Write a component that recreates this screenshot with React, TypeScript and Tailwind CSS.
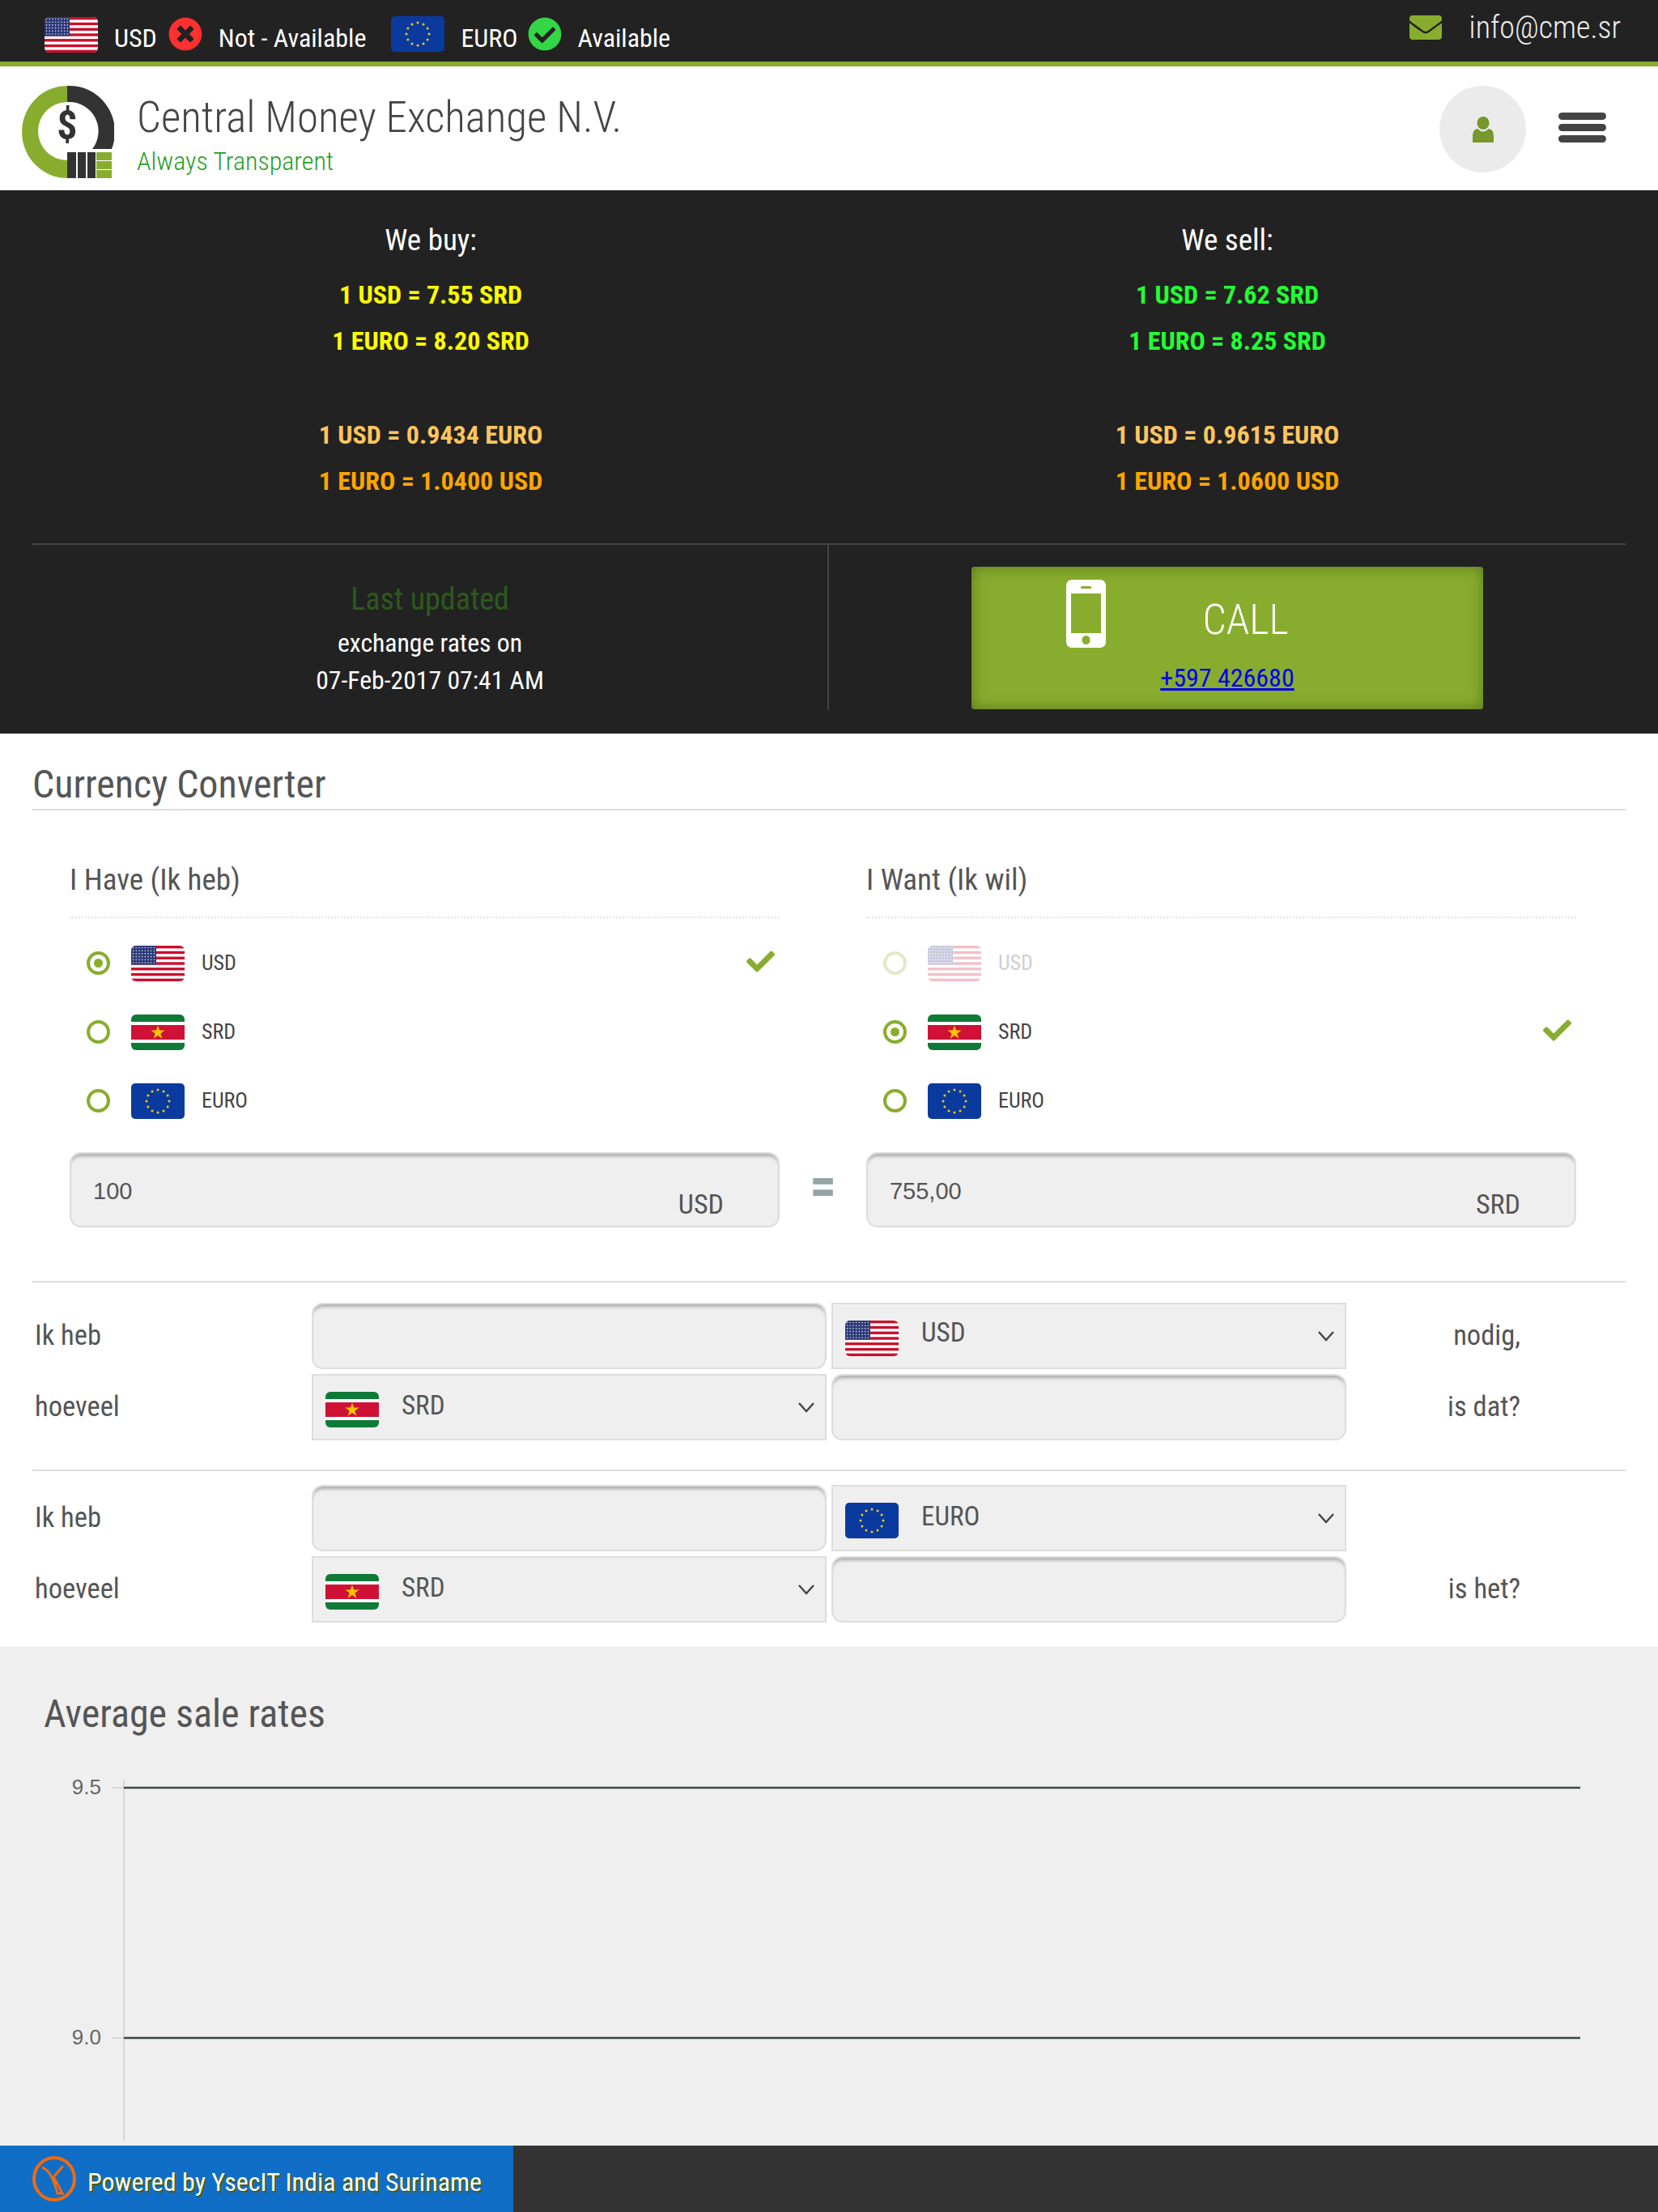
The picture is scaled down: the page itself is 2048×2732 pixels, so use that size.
import { FaCheck, FaCheckCircle, FaEnvelope, FaTimesCircle } from "react-icons/fa";

const radioLeft = ["USD", "SRD", "EURO"];

function FlagUS({ className }: { className?: string }) {
  return (
    <svg viewBox="0 0 66 44" className={className}>
      <defs>
        <clipPath id="us-clip"><rect width="66" height="44" rx="6" /></clipPath>
      </defs>
      <g clipPath="url(#us-clip)">
        <rect width="66" height="44" fill="#fff" />
        {[0, 1, 2, 3, 4, 5, 6].map((i) => (
          <rect key={i} y={i * 6.77} width="66" height="3.4" fill="#c8102e" />
        ))}
        <rect width="31" height="23.5" fill="#2c3a78" />
        {[0, 1, 2, 3, 4, 5].map((r) =>
          [0, 1, 2, 3, 4, 5, 6, 7].map((c) => (
            <circle key={`${r}-${c}`} cx={2.5 + c * 3.7} cy={2.5 + r * 3.7} r="0.8" fill="#dfe3f2" />
          ))
        )}
      </g>
    </svg>
  );
}

function FlagSR({ className }: { className?: string }) {
  return (
    <svg viewBox="0 0 66 44" className={className}>
      <defs>
        <clipPath id="sr-clip"><rect width="66" height="44" rx="6" /></clipPath>
      </defs>
      <g clipPath="url(#sr-clip)">
        <rect width="66" height="44" fill="#fff" />
        <rect width="66" height="9" fill="#0f7a37" />
        <rect y="35" width="66" height="9" fill="#0f7a37" />
        <rect y="13" width="66" height="18" fill="#cf1136" />
        <polygon points="33,13.5 35.2,19.6 41.6,19.6 36.4,23.5 38.3,29.8 33,26 27.7,29.8 29.6,23.5 24.4,19.6 30.8,19.6" fill="#f8c300" />
      </g>
    </svg>
  );
}

function FlagEU({ className }: { className?: string }) {
  const stars = Array.from({ length: 12 }, (_, i) => (i * Math.PI) / 6);
  return (
    <svg viewBox="0 0 66 44" className={className}>
      <rect width="66" height="44" rx="5" fill="#0b3a9e" />
      {stars.map((a, i) => (
        <circle key={i} cx={33 + Math.cos(a) * 14} cy={22 + Math.sin(a) * 14} r="1.5" fill="#f2cb1d" />
      ))}
    </svg>
  );
}

function Flag({ code, className }: { code: string; className?: string }) {
  if (code === "USD") return <FlagUS className={className} />;
  if (code === "SRD") return <FlagSR className={className} />;
  return <FlagEU className={className} />;
}

function Logo() {
  return (
    <svg viewBox="0 0 114 116" className="mt-[2px] h-[116px] w-[114px] shrink-0">
      <path d="M56 1 A56 57 0 0 0 56 115 L56 93 A36 36 0 0 1 56 21 Z" fill="#88ad2e" />
      <path d="M56 1 A56 57 0 0 1 111 79 L87 79 A36 36 0 0 0 56 21 Z" fill="#333" />
      <text x="56" y="67" textAnchor="middle" fontFamily="Roboto" fontWeight="700" fontSize="50" fill="#333">$</text>
      <rect x="56" y="83" width="11" height="32" fill="#333" />
      <rect x="69" y="83" width="10" height="32" fill="#333" />
      <rect x="81" y="83" width="10" height="32" fill="#333" />
      <rect x="92" y="83" width="19" height="10" fill="#88ad2e" />
      <rect x="92" y="94" width="19" height="10" fill="#88ad2e" />
      <rect x="92" y="105" width="19" height="10" fill="#88ad2e" />
    </svg>
  );
}

function RateColumn({ title, first, second, third, fourth, firstColor }: {
  title: string;
  first: string;
  second: string;
  third: string;
  fourth: string;
  firstColor: string;
}) {
  return (
    <div className="flex flex-1 flex-col items-center">
      <div className="flex h-[40px] items-center text-[37px] leading-none text-white">{title}</div>
      <div className={`mt-[28px] flex h-[40px] items-center text-[32px] font-bold ${firstColor}`}>{first}</div>
      <div className={`mt-[17px] flex h-[40px] items-center text-[32px] font-bold ${firstColor}`}>{second}</div>
      <div className="mt-[76px] flex h-[40px] items-center text-[32px] font-bold text-[#ffc55f]">{third}</div>
      <div className="mt-[17px] flex h-[40px] items-center text-[32px] font-bold text-[#ffa500]">{fourth}</div>
    </div>
  );
}

function CurrencyColumn({ title, selected, disabled, value, unit }: {
  title: string;
  selected: string;
  disabled?: string;
  value: string;
  unit: string;
}) {
  return (
    <div className="w-[877px]">
      <div className="flex h-[88px] items-center border-b-2 border-dotted border-[#e4e4e4] pb-[4px] text-[37px] text-[#555]">{title}</div>
      <div className="mt-[13px] flex flex-col">
        {radioLeft.map((code) => (
          <div key={code} className={`flex h-[85px] items-center pl-[21px] ${code === disabled ? "opacity-25" : ""}`}>
            <span className="flex h-[29px] w-[29px] items-center justify-center rounded-full border-[4px] border-[#88ad2e]">
              {code === selected && <span className="h-[11px] w-[11px] rounded-full bg-[#88ad2e]" />}
            </span>
            <Flag code={code} className="ml-[26px] h-[44px] w-[66px]" />
            <span className="ml-[21px] text-[26px] text-[#444]">{code}</span>
            {code === selected && <FaCheck className="mb-[4px] ml-auto mr-[6px] text-[35px] text-[#88ad2e]" />}
          </div>
        ))}
      </div>
      <div className="mt-[21px] flex h-[93px] justify-between rounded-[14px] border-2 border-[#ddd] bg-[#efefef] pl-[27px] pr-[67px] shadow-[inset_0_6px_4px_-3px_#aaa]">
        <span className="mt-[30px] font-['Liberation_Sans'] text-[29px] leading-[32px] text-[#555] [font-stretch:normal]">{value}</span>
        <span className="mt-[42px] text-[34px] leading-[40px] text-[#555]">{unit}</span>
      </div>
    </div>
  );
}

function BlankInput() {
  return <div className="h-[82px] w-[636px] rounded-[14px] border-2 border-[#ddd] bg-[#efefef] shadow-[inset_0_6px_4px_-3px_#aaa]" />;
}

function SelectBox({ code }: { code: string }) {
  return (
    <div className="flex h-[82px] w-[636px] items-center border-2 border-[#ddd] bg-[#efefef] pl-[15px] pr-[12px]">
      <Flag code={code} className="mt-[6px] h-[44px] w-[66px]" />
      <span className={`ml-[28px] text-[33px] text-[#555] ${code === "USD" ? "mb-[8px]" : "mb-[4px]"}`}>{code}</span>
      <svg viewBox="0 0 22 14" className="ml-auto h-[14px] w-[22px]">
        <path d="M2 2 L11 12 L20 2" fill="none" stroke="#444" strokeWidth="2.4" />
      </svg>
    </div>
  );
}

function ConvertRow({ label, end, swap, code }: { label: string; end: string; swap: boolean; code: string }) {
  return (
    <div className="flex items-center">
      <div className="w-[342px] text-[34.5px] text-[#555]">{label}</div>
      <div className="flex gap-[6px]">
        {swap ? <SelectBox code={code} /> : <BlankInput />}
        {swap ? <BlankInput /> : <SelectBox code={code} />}
      </div>
      <div className="flex-1 text-right text-[34.5px] text-[#555]">
        <span className="mr-[130px] whitespace-nowrap">{end}</span>
      </div>
    </div>
  );
}

function Chart() {
  return (
    <svg viewBox="0 0 2048 460" className="h-[460px] w-[2048px]">
      <line x1="153" y1="14" x2="153" y2="460" stroke="#d6d6d6" strokeWidth="2" />
      <line x1="138" y1="24" x2="153" y2="24" stroke="#d6d6d6" strokeWidth="2" />
      <line x1="138" y1="333" x2="153" y2="333" stroke="#d6d6d6" strokeWidth="2" />
      <line x1="153" y1="24" x2="1952" y2="24" stroke="#3a4646" strokeWidth="2.5" />
      <line x1="153" y1="333" x2="1952" y2="333" stroke="#3a4646" strokeWidth="2.5" />
      <text x="125" y="32" textAnchor="end" fontFamily="Liberation Sans" fontSize="26" fill="#666">9.5</text>
      <text x="125" y="341" textAnchor="end" fontFamily="Liberation Sans" fontSize="26" fill="#666">9.0</text>
    </svg>
  );
}

export default function App() {
  return (
    <div className="relative h-[2732px] w-[2048px] overflow-hidden bg-white font-['Roboto'] [font-stretch:75%]">
      <div className="flex h-[82px] items-center border-b-[6px] border-[#88ad2e] bg-[#222] pl-[55px] pr-[46px] text-[32px] text-white">
        <FlagUS className="mt-[10px] h-[44px] w-[66px]" />
        <span className="ml-[20px] mt-[18px]">USD</span>
        <FaTimesCircle className="ml-[14px] mt-[8px] text-[42px] text-[#ff3030]" />
        <span className="ml-[20px] mt-[18px]">Not - Available</span>
        <FlagEU className="ml-[31px] mt-[8px] h-[44px] w-[66px]" />
        <span className="ml-[20px] mt-[18px]">EURO</span>
        <FaCheckCircle className="ml-[12px] mt-[8px] text-[42px] text-[#33d645]" />
        <span className="ml-[20px] mt-[18px]">Available</span>
        <FaEnvelope className="mb-[8px] ml-auto text-[40px] text-[#88ad2e]" />
        <span className="mb-[8px] ml-[34px] text-[38px] font-light text-[#eee]">info@cme.sr</span>
      </div>

      <div className="flex h-[153px] items-center pl-[27px] pr-[64px] pt-[6px]">
        <Logo />
        <div className="ml-[28px] mt-[9px] flex flex-col">
          <span className="text-[53px] font-light leading-[60px] text-[#444]">Central Money Exchange N.V.</span>
          <span className="mt-[5px] text-[32px] font-light leading-[38px] text-[#1f9f1f]">Always Transparent</span>
        </div>
        <div className="ml-auto mb-[4px] flex h-[107px] w-[107px] items-center justify-center rounded-full bg-[#ebebeb]">
          <svg viewBox="0 0 28 32" className="h-[32px] w-[28px]">
            <ellipse cx="14" cy="8" rx="7.5" ry="8" fill="#76982c" />
            <path d="M1 32 L1 24 Q1 16 7 15 Q14 22 21 15 Q27 16 27 24 L27 32 Z" fill="#76982c" />
          </svg>
        </div>
        <div className="mb-[9px] ml-[40px] flex w-[59px] flex-col gap-[5px]">
          <span className="h-[9px] rounded-full bg-[#444]" />
          <span className="h-[9px] rounded-full bg-[#444]" />
          <span className="h-[9px] rounded-full bg-[#444]" />
        </div>
      </div>

      <div className="h-[671px] bg-[#222] px-[40px] pt-[41px]">
        <div className="flex">
          <RateColumn title="We buy:" first="1 USD = 7.55 SRD" second="1 EURO = 8.20 SRD" third="1 USD = 0.9434 EURO" fourth="1 EURO = 1.0400 USD" firstColor="text-[#ffff00]" />
          <RateColumn title="We sell:" first="1 USD = 7.62 SRD" second="1 EURO = 8.25 SRD" third="1 USD = 0.9615 EURO" fourth="1 EURO = 1.0600 USD" firstColor="text-[#22ff33]" />
        </div>
        <div className="mt-[57px] flex h-[206px] border-t-2 border-[#444]">
          <div className="flex w-[984px] flex-col items-center border-r-2 border-[#444] pt-[47px]">
            <span className="text-[38px] font-normal leading-[40px] text-[#2c5a1c]">Last updated</span>
            <span className="mt-[17px] text-[31.7px] leading-[36px] text-white">exchange rates on</span>
            <span className="mt-[10px] text-[31.7px] leading-[36px] text-white">07-Feb-2017 07:41 AM</span>
          </div>
          <div className="flex-1 pl-[176px] pt-[27px]">
            <div className="relative flex h-[176px] w-[632px] flex-col items-center rounded-[4px] bg-[#88ad2e] shadow-[inset_0_0_18px_#5a771a]">
              <svg viewBox="0 0 49 84" className="absolute left-[117px] top-[16px] h-[84px] w-[49px]">
                <rect width="49" height="84" rx="7" fill="#fff" />
                <rect x="6" y="17" width="37" height="49" fill="#88ad2e" />
                <rect x="18" y="8" width="13" height="3" rx="1" fill="#88ad2e" />
                <ellipse cx="24.5" cy="74.5" rx="5" ry="5.5" fill="#88ad2e" />
              </svg>
              <span className="ml-[45px] mt-[36px] text-[52px] font-light leading-[60px] text-white">CALL</span>
              <a href="#" className="mt-[23px] text-[32px] leading-[36px] text-[#0000ee] underline">+597 426680</a>
            </div>
          </div>
        </div>
      </div>

      <div className="h-[1128px] px-[40px] pt-[39px]">
        <div className="flex h-[56px] items-center border-b-2 border-[#ddd] pb-[6px] text-[48px] font-normal text-[#555]">Currency Converter</div>
        <div className="mt-[45px] flex justify-between pl-[46px] pr-[61px]">
          <CurrencyColumn title="I Have (Ik heb)" selected="USD" value="100" unit="USD" />
          <span className="mt-[394px] text-[66px] font-bold leading-[50px] text-[#95a5a6]">=</span>
          <CurrencyColumn title="I Want (Ik wil)" selected="SRD" disabled="USD" value="755,00" unit="SRD" />
        </div>
        <div className="mt-[66px] border-t-2 border-[#ddd] pt-[25px] pl-[3px]">
          <div className="flex flex-col gap-[6px]">
            <ConvertRow label="Ik heb" end="nodig," swap={false} code="USD" />
            <ConvertRow label="hoeveel" end="is dat?" swap code="SRD" />
          </div>
        </div>
        <div className="mt-[36px] border-t-2 border-[#ddd] pt-[17px] pl-[3px]">
          <div className="flex flex-col gap-[6px]">
            <ConvertRow label="Ik heb" end="" swap={false} code="EURO" />
            <ConvertRow label="hoeveel" end="is het?" swap code="SRD" />
          </div>
        </div>
      </div>

      <div className="h-[698px] bg-[#efefef] pt-[55px]">
        <div className="pl-[54px] text-[48px] font-normal leading-[56px] text-[#555]">Average sale rates</div>
        <div className="mt-[39px]">
          <Chart />
        </div>
      </div>

      <div className="fixed bottom-0 left-0 flex h-[82px] w-[2048px] bg-[#333]">
        <div className="flex w-[634px] items-center bg-[#106ec6] pl-[40px]">
          <svg viewBox="0 0 54 56" className="h-[56px] w-[54px]">
            <ellipse cx="27" cy="28" rx="25" ry="26" fill="none" stroke="#f06a10" strokeWidth="4" />
            <path d="M12 14 Q24 18 31 46 L37 46 Q28 28 26 26 L38 12" fill="none" stroke="#f06a10" strokeWidth="3" />
          </svg>
          <span className="ml-[14px] mt-[8px] text-[32px] text-white [text-shadow:2px_2px_0_#4a5a00]">Powered by YsecIT India and Suriname</span>
        </div>
      </div>
    </div>
  );
}
